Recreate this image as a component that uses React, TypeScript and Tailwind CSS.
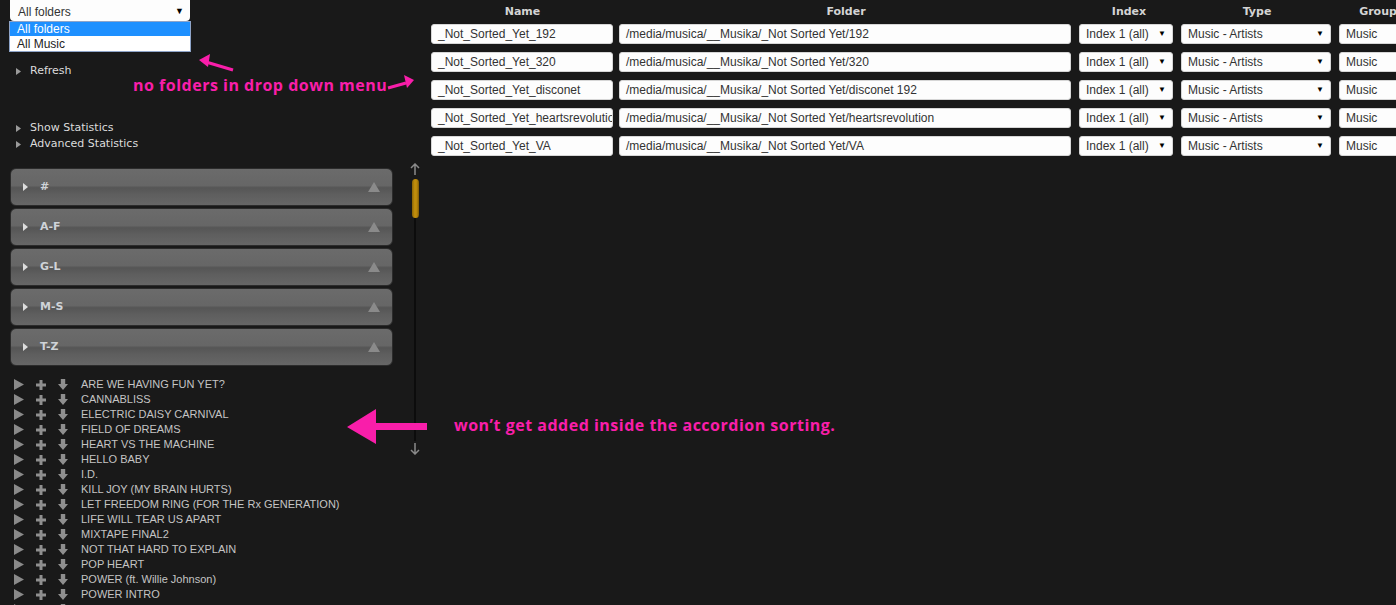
import React from 'react';

const tracks = [
  'ARE WE HAVING FUN YET?',
  'CANNABLISS',
  'ELECTRIC DAISY CARNIVAL',
  'FIELD OF DREAMS',
  'HEART VS THE MACHINE',
  'HELLO BABY',
  'I.D.',
  'KILL JOY (MY BRAIN HURTS)',
  'LET FREEDOM RING (FOR THE Rx GENERATION)',
  'LIFE WILL TEAR US APART',
  'MIXTAPE FINAL2',
  'NOT THAT HARD TO EXPLAIN',
  'POP HEART',
  'POWER (ft. Willie Johnson)',
  'POWER INTRO',
  'PRETTY GIRLS',
];

const sections = ['#', 'A-F', 'G-L', 'M-S', 'T-Z'];

const folders = [
  { name: '_Not_Sorted_Yet_192', path: '/media/musica/__Musika/_Not Sorted Yet/192' },
  { name: '_Not_Sorted_Yet_320', path: '/media/musica/__Musika/_Not Sorted Yet/320' },
  { name: '_Not_Sorted_Yet_disconet', path: '/media/musica/__Musika/_Not Sorted Yet/disconet 192' },
  { name: '_Not_Sorted_Yet_heartsrevolution', path: '/media/musica/__Musika/_Not Sorted Yet/heartsrevolution' },
  { name: '_Not_Sorted_Yet_VA', path: '/media/musica/__Musika/_Not Sorted Yet/VA' },
];

function SmallArrow() {
  return (
    <svg className="w-[5px] h-[7px] shrink-0" viewBox="0 0 5 7">
      <path d="M0 0l5 3.5L0 7z" fill="#9a9a9a" />
    </svg>
  );
}

function MenuLink({ label }: { label: string }) {
  return (
    <div className="flex items-center h-[16px] pl-[16px] gap-[9px] text-[11px] text-[#dcdcdc] font-['DejaVu_Sans',sans-serif]">
      <SmallArrow />
      <span>{label}</span>
    </div>
  );
}

function AccordionHeader({ label }: { label: string }) {
  return (
    <div className="h-[38px] rounded-[6px] border border-[#2c2c2c] bg-[linear-gradient(to_bottom,#6b6b6b_0%,#666666_46%,#555555_52%,#5e5e5e_70%,#666666_100%)] flex items-center pl-[12px] pr-[12px]">
      <svg className="w-[5px] h-[8px] shrink-0" viewBox="0 0 5 8">
        <path d="M0 0l5 4-5 4z" fill="#dddddd" />
      </svg>
      <span className="ml-[12px] text-[11px] font-bold text-[#cfd3d8] font-['DejaVu_Sans',sans-serif]">
        {label}
      </span>
      <svg className="ml-auto w-[12px] h-[10px]" viewBox="0 0 12 10">
        <path d="M6 0l6 10H0z" fill="#8a8a8a" />
      </svg>
    </div>
  );
}

function TrackRow({ title }: { title: string }) {
  return (
    <div className="flex items-center h-[15px]">
      <svg className="w-[10px] h-[11px] ml-[14px]" viewBox="0 0 10 11">
        <path d="M0 0l10 5.5L0 11z" fill="#8a8a8a" />
      </svg>
      <svg className="w-[10px] h-[10px] ml-[12px]" viewBox="0 0 10 10">
        <path d="M3.5 0h3v3.5H10v3H6.5V10h-3V6.5H0v-3h3.5z" fill="#8f8f8f" />
      </svg>
      <svg className="w-[10px] h-[11px] ml-[12px]" viewBox="0 0 10 11">
        <path d="M2.8 0h4.4v5H10l-5 6-5-6h2.8z" fill="#8f8f8f" />
      </svg>
      <span className="ml-[13px] text-[11px] text-[#c4c4c4] whitespace-nowrap font-['Liberation_Sans',Arial,sans-serif]">
        {title}
      </span>
    </div>
  );
}

function Scrollbar() {
  return (
    <div className="w-[14px] -mt-[5px] flex flex-col items-center">
      <svg className="w-[10px] h-[12px]" viewBox="0 0 10 12">
        <path d="M5 1v11M1 5l4-4 4 4" stroke="#8a8a8a" strokeWidth="1.5" fill="none" />
      </svg>
      <div className="mt-[4px] w-[7px] h-[39px] rounded-full bg-[linear-gradient(to_right,#8a6406,#c3900c_40%,#b8860b_70%,#7d5a05)]" />
      <div className="w-[2px] h-[223px] bg-[#0c0c0c]" />
      <svg className="w-[10px] h-[12px] mt-[2px]" viewBox="0 0 10 12">
        <path d="M5 0v11M1 7l4 4 4-4" stroke="#8a8a8a" strokeWidth="1.5" fill="none" />
      </svg>
    </div>
  );
}

function TextBox({ value, className }: { value: string; className: string }) {
  return (
    <div
      className={
        'h-[20px] shrink-0 bg-[#fdfdfd] rounded-[3px] border border-[#d6d6d6] pl-[6px] flex items-center overflow-hidden whitespace-nowrap text-[12px] text-[#333] font-["Liberation_Sans",Arial,sans-serif] ' +
        className
      }
    >
      {value}
    </div>
  );
}

function SelectBox({ value, className }: { value: string; className: string }) {
  return (
    <div
      className={
        'h-[20px] shrink-0 bg-[#fdfdfd] rounded-[3px] border border-[#d6d6d6] pl-[6px] pr-[6px] flex items-center whitespace-nowrap text-[12px] text-[#333] font-["Liberation_Sans",Arial,sans-serif] ' +
        className
      }
    >
      <span>{value}</span>
      <span className="ml-auto text-[8px] text-black">▼</span>
    </div>
  );
}

export default function App() {
  return (
    <div className="relative w-[1396px] h-[605px] overflow-hidden bg-[#191919] flex">
      {/* left side */}
      <div className="w-[430px] shrink-0 flex flex-col">
        <div className="relative ml-[10px] w-[180px] h-[21px] bg-[#fdfdfd] rounded-b-[4px] flex items-center pt-[3px] pl-[8px] pr-[6px] text-[12px] text-[#333] font-['Liberation_Sans',Arial,sans-serif]">
          <span>All folders</span>
          <span className="ml-auto text-[9px] text-black">▼</span>
          <div className="absolute left-[-1px] top-[21px] w-[182px] bg-white border border-[#8ea4c8] text-[12px]">
            <div className="h-[14px] bg-[#1e90ff] text-white pl-[7px] flex items-center">All folders</div>
            <div className="h-[15px] text-[#222] pl-[7px] flex items-center">All Music</div>
          </div>
        </div>

        <div className="mt-[42px]">
          <MenuLink label="Refresh" />
        </div>
        <div className="mt-[41px]">
          <MenuLink label="Show Statistics" />
          <MenuLink label="Advanced Statistics" />
        </div>

        <div className="mt-[16px] flex">
          <div className="w-[408px]">
            <div className="ml-[10px] w-[383px] flex flex-col gap-[2px]">
              {sections.map((s) => (
                <AccordionHeader key={s} label={s} />
              ))}
            </div>
            <div className="mt-[11px] flex flex-col">
              {tracks.map((t) => (
                <TrackRow key={t} title={t} />
              ))}
            </div>
          </div>
          <Scrollbar />
        </div>
      </div>

      {/* folders table */}
      <div className="flex flex-col">
        <div className="flex h-[22px] pt-[2px] items-center text-[11px] font-bold text-[#d4d4d4] font-['DejaVu_Sans',sans-serif]">
          <div className="w-[183px] ml-[1px] text-center">Name</div>
          <div className="w-[452px] ml-[6px] text-center">Folder</div>
          <div className="w-[94px] ml-[10px] text-center">Index</div>
          <div className="w-[150px] ml-[6px] text-center">Type</div>
          <div className="w-[74px] ml-[9px] text-center whitespace-nowrap">Group</div>
        </div>
        <div className="mt-[2px] flex flex-col gap-[8px]">
          {folders.map((f) => (
            <div key={f.name} className="flex">
              <TextBox value={f.name} className="w-[182px] ml-[1px]" />
              <TextBox value={f.path} className="w-[452px] ml-[6px]" />
              <SelectBox value="Index 1 (all)" className="w-[94px] ml-[8px]" />
              <SelectBox value="Music - Artists" className="w-[150px] ml-[8px]" />
              <TextBox value="Music" className="w-[76px] ml-[8px]" />
            </div>
          ))}
        </div>
      </div>

      {/* annotations */}
      <svg className="absolute left-0 top-0 w-[430px] h-[160px] pointer-events-none" viewBox="0 0 430 160">
        <path d="M233 70L206 62" stroke="#f91eaa" strokeWidth="3" />
        <path d="M199 60l11-6-2 13z" fill="#f91eaa" />
        <path d="M388 88L406 83" stroke="#f91eaa" strokeWidth="3" />
        <path d="M414 80l-10-5 3 13z" fill="#f91eaa" />
      </svg>
      <div className="absolute left-[133px] top-[73px] text-[16px] tracking-[0.5px] font-bold text-[#f91eaa] whitespace-nowrap font-['Open_Sans',sans-serif]">
        no folders in drop down menu
      </div>
      <svg className="absolute left-[340px] top-[405px] w-[90px] h-[45px] pointer-events-none" viewBox="0 0 90 45">
        <path d="M7 22L36 4v14h51v7H36v14z" fill="#f91eaa" />
      </svg>
      <div className="absolute left-[454px] top-[413px] text-[16px] tracking-[0.5px] font-bold text-[#f91eaa] whitespace-nowrap font-['Open_Sans',sans-serif]">
        won’t get added inside the accordion sorting.
      </div>
    </div>
  );
}
